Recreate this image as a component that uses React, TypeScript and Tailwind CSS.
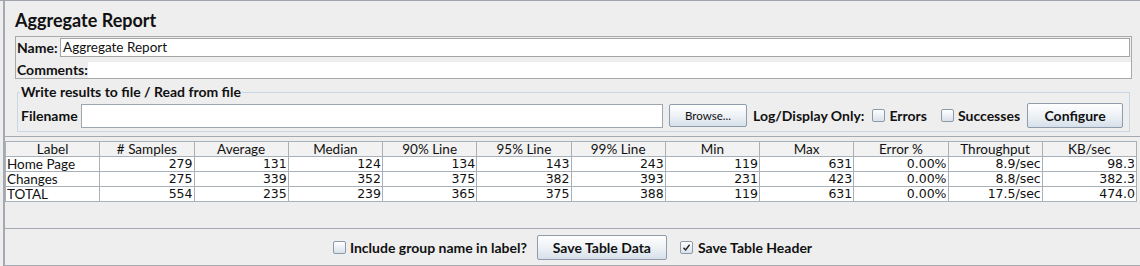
import React from "react";

const cols = ["Label", "# Samples", "Average", "Median", "90% Line", "95% Line", "99% Line", "Min", "Max", "Error %", "Throughput", "KB/sec"];
const rows: string[][] = [
  ["Home Page", "279", "131", "124", "134", "143", "243", "119", "631", "0.00%", "8.9/sec", "98.3"],
  ["Changes", "275", "339", "352", "375", "382", "393", "231", "423", "0.00%", "8.8/sec", "382.3"],
  ["TOTAL", "554", "235", "239", "365", "375", "388", "119", "631", "0.00%", "17.5/sec", "474.0"],
];

function Checkbox({ checked = false }: { checked?: boolean }) {
  return (
    <span className="inline-flex items-center justify-center w-[13px] h-[13px] border border-[#8c9aa8] rounded-[2px] bg-gradient-to-b from-[#ffffff] to-[#d9e1ea] shrink-0">
      {checked && (
        <svg width="9" height="9" viewBox="0 0 9 9">
          <path d="M1.5 4.8 L3.6 7 L7.6 1.8" stroke="#222" strokeWidth="1.4" fill="none" />
        </svg>
      )}
    </span>
  );
}

function Button({ children, className = "" }: { children: React.ReactNode; className?: string }) {
  return (
    <div className={"flex items-center justify-center shrink-0 border border-[#8e9cab] rounded-[2px] bg-gradient-to-b from-[#fefefe] via-[#eef2f6] to-[#d6e0ea] " + className}>
      {children}
    </div>
  );
}

export default function App() {
  return (
    <div className="w-[1140px] h-[266px] bg-[#eeeeee] border-t border-[#9ea4aa] overflow-hidden text-[#111] font-['Lato',sans-serif]">
      <div className="ml-[3px] h-full border-l-2 border-[#a4aab0] flex flex-col">
        {/* Title */}
        <div className="pl-[10px] pt-[8px] h-[35px] text-[18px] leading-[22px] font-bold">Aggregate Report</div>

        {/* Name / Comments panel */}
        <div className="ml-[10px] mr-[8px] border border-[#a9a9a9] flex flex-col">
          <div className="flex items-center h-[20px]">
            <span className="pl-[1px] w-[44px] text-[14px] font-bold">Name:</span>
            <div className="flex-1 h-[19px] mr-[1px] bg-white border border-[#a5a5a5] flex items-center pl-[2px] text-[13.5px]">Aggregate Report</div>
          </div>
          <div className="h-[4px]"></div>
          <div className="flex items-center h-[17px]">
            <span className="pl-[1px] w-[72px] text-[14px] font-bold">Comments:</span>
            <div className="flex-1 h-[16px] bg-white"></div>
          </div>
        </div>

        {/* Fieldset */}
        <div className="ml-[12px] mr-[10px] mt-[13px] h-[40px] border border-[#c7d7e5] relative flex items-end pb-[3px]">
          <span className="absolute left-[2px] top-[-9px] px-[1px] bg-[#eeeeee] text-[14px] font-bold leading-[16px]">Write results to file / Read from file</span>
          <div className="flex items-center w-full">
            <span className="pl-[3px] w-[63px] text-[14px] font-bold">Filename</span>
            <div className="w-[582px] h-[24px] bg-white border border-[#9fa7ae] shrink-0"></div>
            <Button className="ml-[6px] w-[78px] h-[23px] text-[11.5px]">Browse...</Button>
            <span className="ml-[6px] text-[14px] font-bold">Log/Display Only:</span>
            <span className="ml-[8px] flex"><Checkbox /></span>
            <span className="ml-[4px] text-[14px] font-bold">Errors</span>
            <span className="ml-[14px] flex"><Checkbox /></span>
            <span className="ml-[4px] text-[14px] font-bold">Successes</span>
            <Button className="ml-[7px] w-[96px] h-[25px] text-[14px] font-bold">Configure</Button>
          </div>
        </div>

        {/* Table area */}
        <div className="mt-[4px] h-[93px] border-t border-b border-[#a5abb1] pt-[4px] pr-[1px]">
          <div className="grid grid-cols-12 border-l border-[#a8b0b8] w-[1132px]">
            {cols.map((c) => (
              <div key={c} className="h-[16px] border-r border-b border-t border-[#a8b0b8] text-center text-[13.5px] leading-[14px] bg-[#f2f2f2]">{c}</div>
            ))}
            {rows.map((r, i) =>
              r.map((v, j) => (
                <div
                  key={i + "-" + j}
                  className={
                    "h-[15px] bg-white border-r border-b border-[#a8b0b8] leading-[14px] " +
                    (j === 0 ? "text-left pl-[1px] text-[13.5px]" : "text-right pr-[1px] font-['DejaVu_Sans',sans-serif] text-[12.5px]")
                  }
                >
                  {v}
                </div>
              ))
            )}
          </div>
        </div>

        {/* Bottom bar */}
        <div className="h-[37px] border-b border-[#a5abb1] flex items-center justify-center">
          <Checkbox />
          <span className="ml-[4px] text-[14px] font-bold">Include group name in label?</span>
          <Button className="ml-[10px] w-[130px] h-[25px] text-[14px] font-bold">Save Table Data</Button>
          <span className="ml-[13px] flex"><Checkbox checked /></span>
          <span className="ml-[5px] text-[14px] font-bold">Save Table Header</span>
        </div>
      </div>
    </div>
  );
}
